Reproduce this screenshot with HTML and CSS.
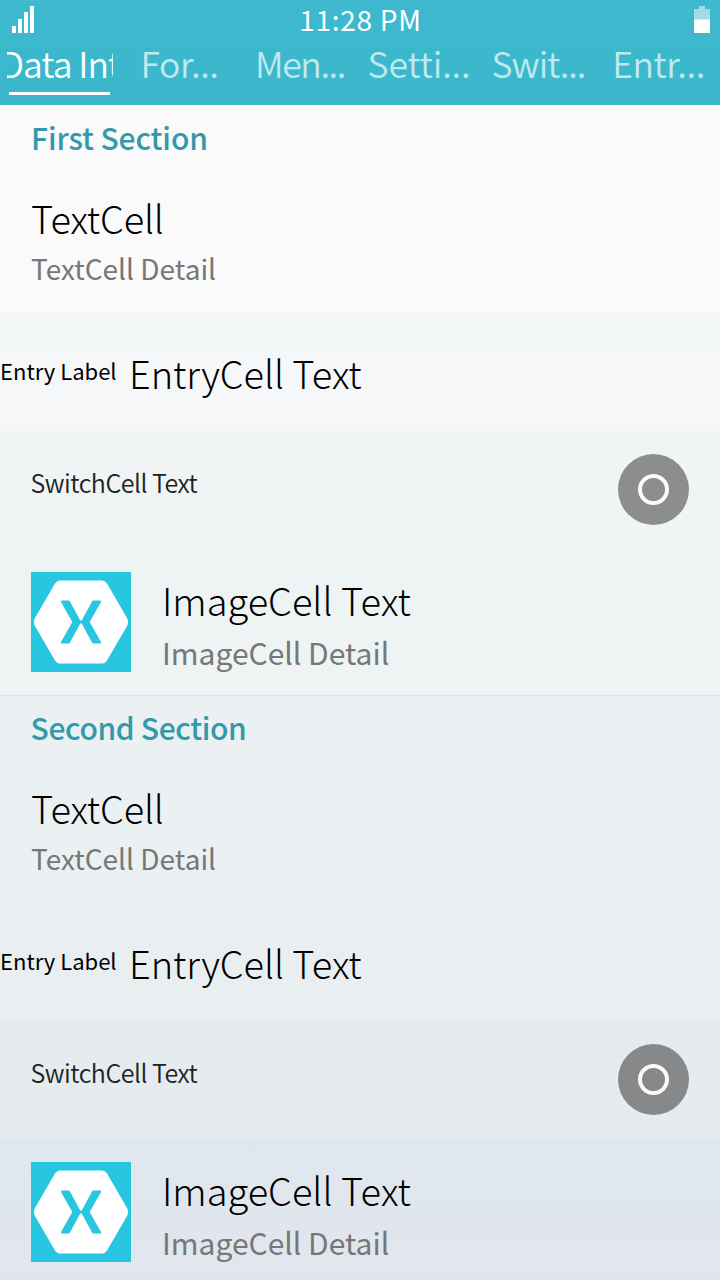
FILE: index.html
```
<!DOCTYPE html>
<html lang="en">
<head>
<meta charset="utf-8">
<title>Data Intensive</title>
<link rel="stylesheet" href="styles.css">
</head>
<body>
<svg class="defs" width="0" height="0" aria-hidden="true">
  <symbol id="logo" viewBox="0 0 100 100">
    <rect width="100" height="100" fill="#28c6e0"/>
    <path d="M29 8.500H71Q74 8.500 76 11.500L96.300 46.500Q98 50 96.300 53.500L76 88.500Q74 91.500 71 91.500H29Q26 91.500 24 88.500L3.700 53.500Q2 50 3.700 46.500L24 11.500Q26 8.500 29 8.500Z" fill="#fff"/>
    <path d="M30.500 28.500H37.500Q38.500 28.500 39 29.500L49 48Q50 49.500 51 48L61 29.500Q61.500 28.500 62.500 28.500H69.500Q70.500 29 70 30L58.700 50L70 70Q70.500 71 69.500 71.500H62.500Q61.500 71.500 61 70.500L51 52Q50 50.500 49 52L39 70.500Q38.500 71.500 37.500 71.500H30.500Q29.500 71 30 70L41.300 50L30 30Q29.500 29 30.500 28.500Z" fill="#28c6e0"/>
  </symbol>
</svg>
<header class="top">
  <div class="status">
    <svg class="signal" width="22" height="27" viewBox="0 0 22 27"><path d="M0 20h4v7H0zM6 13h4v14H6zM12 6h4v21h-4zM18 -1h4v28h-4z" fill="#fff"/></svg>
    <span class="clock">11:28 PM</span>
    <svg class="battery" width="16" height="27" viewBox="0 0 16 27"><path d="M5 0h6v3h5v11H0V3h5z" fill="#a0dce6"/><path d="M0 13.500h16V27H0z" fill="#fff"/></svg>
  </div>
  <nav class="tabs">
    <div class="tab active"><span class="marquee"><span>Data Int</span></span></div>
    <div class="tab t2">For...</div>
    <div class="tab t3">Men...</div>
    <div class="tab t4">Setti...</div>
    <div class="tab t5">Swit...</div>
    <div class="tab t6">Entr...</div>
  </nav>
</header>
<main>
  <section class="group first">
    <h2 class="title">First Section</h2>
    <div class="text-cell"><div class="primary p-text">TextCell</div><div class="detail">TextCell Detail</div></div>
    <div class="entry-cell"><span class="label">Entry Label</span><span class="primary p-entry">EntryCell Text</span></div>
    <div class="switch-cell"><span class="caption">SwitchCell Text</span><span class="toggle"><i></i></span></div>
    <div class="image-cell"><svg class="logo" width="100" height="100"><use href="#logo"/></svg><div><div class="primary p-image">ImageCell Text</div><div class="detail big">ImageCell Detail</div></div></div>
  </section>
  <section class="group second">
    <h2 class="title">Second Section</h2>
    <div class="text-cell"><div class="primary p-text">TextCell</div><div class="detail">TextCell Detail</div></div>
    <div class="entry-cell"><span class="label">Entry Label</span><span class="primary p-entry">EntryCell Text</span></div>
    <div class="switch-cell"><span class="caption">SwitchCell Text</span><span class="toggle"><i></i></span></div>
    <div class="image-cell"><svg class="logo" width="100" height="100"><use href="#logo"/></svg><div><div class="primary p-image">ImageCell Text</div><div class="detail big">ImageCell Detail</div></div></div>
  </section>
</main>
</body>
</html>
```
FILE: styles.css
```
* { box-sizing: border-box; }
body { margin: 0; width: 720px; height: 1280px; overflow: hidden; background: #e1e6ed; font-family: "Noto Sans CJK KR", "Noto Sans", sans-serif; color: #000; white-space: nowrap; }
.defs { display: block; }
.top { height: 105px; background: linear-gradient(#3fb8d0, #3bb8cb 65%); color: #fff; }
.status { height: 38px; display: grid; grid-template-columns: 1fr auto 1fr; padding: 0 11px 0 12px; }
.signal { margin-top: 6px; }
.battery { margin: 6px -1px 0 0; justify-self: end; }
.clock { font-size: 28px; line-height: 38px; letter-spacing: .7px; }
.tabs { height: 67px; display: grid; grid-template-columns: repeat(6, 120px); font-size: 35.500px; font-weight: 350; line-height: 49px; }
.tab { color: #c1e8ee; text-align: center; letter-spacing: -.4px; }
.t2 { padding-right: 1px; }
.t3 { letter-spacing: -1.4px; }
.t4 { letter-spacing: -.1px; padding-right: 2px; }
.t5 { letter-spacing: -1px; padding-right: 3px; }
.t6 { letter-spacing: -.4px; padding-right: 3px; }
.active { color: #fff; display: flex; flex-direction: column; align-items: center; letter-spacing: -1px; }
.active::after { content: ""; width: 101px; height: 3px; margin-top: 5px; margin-right: 1px; background: #fff; }
.marquee { width: 106px; height: 49px; overflow: hidden; display: flex; justify-content: center; }
.title { margin: 0; height: 68px; padding: 12px 31px 0; font-size: 30px; line-height: 40px; font-weight: 500; letter-spacing: -.1px; color: #3399aa; }
.text-cell { height: 138px; padding: 20px 31px 0; }
.primary { font-size: 38px; line-height: 50px; font-weight: 300; letter-spacing: -.1px; }
.p-text { letter-spacing: -.2px; }
.detail { font-size: 28px; line-height: 40px; margin-top: 5px; color: #777; }
.detail.big { font-size: 30px; margin-top: 7px; }
.entry-cell { height: 120px; display: flex; background: linear-gradient(#f3f7f8 41px, #f6f7f9 41px); }
.label { width: 129px; font-size: 22px; line-height: 40px; padding-top: 39px; }
.p-entry { padding-top: 37px; }
.switch-cell { height: 119px; display: flex; justify-content: space-between; padding: 23px 31px 0 30px; background: #f0f4f5; }
.caption { font-size: 25px; font-weight: 350; line-height: 56px; letter-spacing: -.5px; margin-left: .5px; color: #222; }
.toggle { width: 71px; height: 71px; border-radius: 50%; background: #8b8d8f; display: flex; align-items: center; justify-content: center; }
.toggle i { width: 31px; height: 31px; border: 4px solid #fafafa; border-radius: 50%; }
.image-cell { height: 145px; display: flex; gap: 31px; padding: 22px 31px 0; background: #eef3f4; }
.logo { flex: none; }
.p-image { margin-top: 3px; letter-spacing: 0; }
.first { background: #fafafa; }
.second { background: #ebf0f3; border-top: 1px solid #d5e6e7; }
.second .title { height: 67px; padding: 11px 30.500px 0; letter-spacing: -.35px; }
.second .entry-cell { background: #e9eef1; }
.second .switch-cell { background: #e5ebee; }
.second .toggle { background: #868889; }
.second .image-cell { background: linear-gradient(#dfe7ee, #e2e5ed); }
```
